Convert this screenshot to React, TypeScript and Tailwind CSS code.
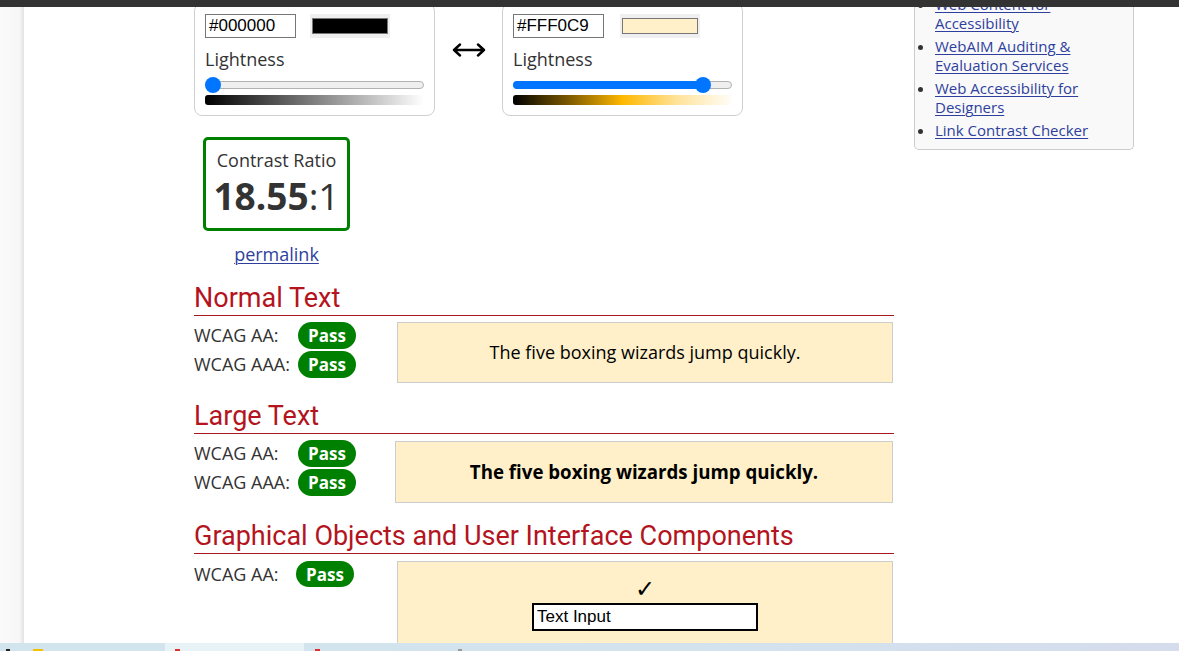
import type { FC } from 'react';

const linkCls = 'text-[#2e3f9e] underline decoration-1 underline-offset-2';

const Badge: FC = () => (
  <span className="inline-flex h-[27px] w-[58px] items-center justify-center rounded-full bg-[#008000] text-[17px] leading-none font-bold text-white">
    Pass
  </span>
);

interface ColorPanelProps {
  hex: string;
  swatchCls: string;
  swatchGap: string;
  gradientCls: string;
  fillCls: string;
  thumbCls: string;
}

const ColorPanel: FC<ColorPanelProps> = ({ hex, swatchCls, swatchGap, gradientCls, fillCls, thumbCls }) => (
  <div className="w-[241px] shrink-0 rounded-lg border border-[#cfcfcf] bg-white px-[10px] pt-[10px] pb-[10px]">
    <div className="flex items-center">
      <div className="flex h-[24px] w-[91px] items-center border border-[#767676] pl-[3px] font-['Liberation_Sans',Arial,sans-serif] text-[17px] text-black">
        {hex}
      </div>
      <div className={`${swatchGap} flex h-[24px] w-[80px] items-center bg-[#efefef] px-[2px]`}>
        <div className={`h-[16px] w-full border border-[#777] ${swatchCls}`} />
      </div>
    </div>
    <div className="mt-[8px] text-[18px] leading-[27px] text-[#333]">Lightness</div>
    <div className="relative mt-[4px] h-[16px]">
      <div className="absolute inset-x-0 top-[4px] h-[8px] rounded-full border border-[#b2b2b2] bg-[#efefef]" />
      <div className={`absolute left-0 top-[4px] h-[8px] rounded-full bg-[#0075ff] ${fillCls}`} />
      <div className={`absolute top-0 h-[16px] w-[16px] rounded-full bg-[#0075ff] ${thumbCls}`} />
    </div>
    <div className={`mt-[2px] h-[10px] rounded-[3px] ${gradientCls}`} />
  </div>
);

const Heading: FC<{ title: string; mt: string }> = ({ title, mt }) => (
  <h2
    className={`${mt} border-b border-[#a8161f] font-['Roboto',sans-serif] text-[27px] leading-[34px] font-normal text-[#b3141e]`}
  >
    {title}
  </h2>
);

const sideLinks = [
  'Web Content for Accessibility',
  'WebAIM Auditing & Evaluation Services',
  'Web Accessibility for Designers',
  'Link Contrast Checker',
];

export default function App() {
  return (
    <div className="flex h-[651px] w-[1179px] flex-col overflow-hidden bg-white font-['Open_Sans',sans-serif] text-[#333]">
      <div className="h-[7px] shrink-0 bg-[#333]" />

      <div className="flex min-h-0 flex-1 overflow-hidden">
        <div className="w-[24px] shrink-0 bg-[linear-gradient(to_right,#fafafa_0%,#f7f7f7_80%,#e3e3e3_100%)]" />

        <div className="flex flex-1 items-start pl-[170px]">
          {/* main column */}
          <div className="-mt-[4px] w-[700px] shrink-0">
            <div className="flex items-start">
              <ColorPanel
                hex="#000000"
                swatchCls="bg-black"
                swatchGap="ml-[14px]"
                gradientCls="bg-[linear-gradient(to_right,#000,#fff)]"
                fillCls="w-0"
                thumbCls="left-0"
              />
              <div className="flex h-[94px] w-[67px] shrink-0 items-center justify-center">
                <svg width="34" height="14" viewBox="0 0 34 14" fill="none" stroke="#000" strokeWidth="2.4" strokeLinecap="round" strokeLinejoin="round">
                  <path d="M2 7H32M8 1.5L2 7L8 12.5M26 1.5L32 7L26 12.5" />
                </svg>
              </div>
              <ColorPanel
                hex="#FFF0C9"
                swatchCls="bg-[#fff0c9]"
                swatchGap="ml-[16px]"
                gradientCls="bg-[linear-gradient(to_right,#000_0%,#7a5800_25%,#ffb800_50%,#ffe39a_75%,#fffdf8_100%)]"
                fillCls="w-[190px]"
                thumbCls="left-[182px]"
              />
            </div>

            <div className="mt-[21px] ml-[9px] flex w-[147px] flex-col items-center">
              <div className="flex h-[94px] w-[147px] flex-col items-center rounded-[5px] border-[3px] border-[#008000] pt-[8px]">
                <div className="text-[18px] leading-[24px]">Contrast Ratio</div>
                <div className="mt-[2px] text-[37px] leading-[44px]">
                  <span className="font-bold">18.55</span>:1
                </div>
              </div>
              <a href="#" className={`mt-[10px] text-[18px] leading-[27px] ${linkCls}`}>
                permalink
              </a>
            </div>

            <Heading title="Normal Text" mt="mt-[13px]" />
            <div className="mt-[6px] flex items-start">
              <div className="grid w-[162px] grid-cols-[104px_58px] gap-y-[2px] text-[18px] leading-[27px]">
                <span>WCAG AA:</span>
                <Badge />
                <span>WCAG AAA:</span>
                <Badge />
              </div>
              <div className="ml-[41px] flex h-[61px] w-[496px] items-center justify-center border border-[#cccccc] bg-[#fff0c9] text-[18px] text-black">
                The five boxing wizards jump quickly.
              </div>
            </div>

            <Heading title="Large Text" mt="mt-[16px]" />
            <div className="mt-[6px] flex items-start">
              <div className="grid w-[162px] grid-cols-[104px_58px] gap-y-[2px] text-[18px] leading-[27px]">
                <span>WCAG AA:</span>
                <Badge />
                <span>WCAG AAA:</span>
                <Badge />
              </div>
              <div className="mt-[1px] ml-[39px] flex h-[62px] w-[498px] items-center justify-center border border-[#cccccc] bg-[#fff0c9] text-[18.7px] font-bold text-black">
                The five boxing wizards jump quickly.
              </div>
            </div>

            <Heading title="Graphical Objects and User Interface Components" mt="mt-[16px]" />
            <div className="mt-[7px] flex items-start">
              <div className="flex w-[160px] items-center text-[18px] leading-[26px]">
                <span className="w-[102px]">WCAG AA:</span>
                <span className="inline-flex h-[26px] w-[58px] items-center justify-center rounded-full bg-[#008000] text-[17px] leading-none font-bold text-white">
                  Pass
                </span>
              </div>
              <div className="ml-[43px] flex h-[110px] w-[496px] flex-col items-center border border-[#cccccc] bg-[#fff0c9] pt-[15px]">
                <div className="font-['DejaVu_Sans',sans-serif] text-[24px] leading-[24px] text-black">✓</div>
                <div className="mt-[2px] flex h-[28px] w-[226px] items-center border-2 border-black bg-white pl-[3px] font-['Liberation_Sans',Arial,sans-serif] text-[17px] text-black">
                  Text Input
                </div>
              </div>
            </div>
          </div>

          {/* sidebar */}
          <div className="-mt-[12px] ml-[20px] w-[220px] shrink-0 rounded-b-[5px] border border-t-0 border-[#cccccc] bg-[#f9f9f9] pb-[9px]">
            <ul className="list-disc pr-[18px] pl-[20px] text-[15px] leading-[19px] marker:text-[#333]">
              {sideLinks.map((l) => (
                <li key={l} className="mb-[4px] last:mb-0">
                  <a href="#" className={linkCls}>
                    {l}
                  </a>
                </li>
              ))}
            </ul>
          </div>
        </div>
      </div>

      <div className="flex h-[8px] shrink-0 bg-[linear-gradient(to_right,#d2e5ee,#d3e3ee_60%,#d5dcec)]">
        <div className="flex w-[165px] items-end">
          <span className="ml-[6px] h-[2px] w-[4px] bg-[#222]" />
          <span className="ml-[23px] h-[2px] w-[10px] bg-[#f2c200]" />
        </div>
        <div className="flex w-[139px] items-end bg-[#e8f3f8]">
          <span className="ml-[10px] h-[2px] w-[5px] bg-[#e03030]" />
        </div>
        <div className="flex items-end">
          <span className="ml-[11px] h-[2px] w-[5px] bg-[#e03030]" />
          <span className="ml-[138px] h-[2px] w-[4px] bg-[#999]" />
        </div>
      </div>
    </div>
  );
}
